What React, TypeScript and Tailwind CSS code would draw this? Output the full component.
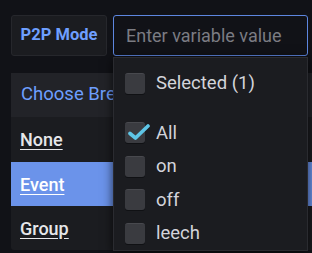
import React from "react";

function Check({ checked }: { checked?: boolean }) {
  return (
    <div className="relative w-[20px] h-[21px] shrink-0 rounded-[3px] bg-[#3a3b40] border-t border-[#48494e] shadow-[0_1px_0_#101114]">
      {checked && (
        <svg
          className="absolute left-[3px] top-[1px]"
          width="22"
          height="16"
          viewBox="0 0 22 16"
        >
          <path
            d="M2 9.5 L7.5 14 L20 2"
            fill="none"
            stroke="#5ec5e6"
            strokeWidth="3.6"
            strokeLinecap="round"
            strokeLinejoin="round"
          />
        </svg>
      )}
    </div>
  );
}

function Option({ label, checked, h }: { label: string; checked?: boolean; h: string }) {
  return (
    <div className={`flex items-center gap-[11px] pl-[11px] ${h}`}>
      <Check checked={checked} />
      <span className="text-[18.5px] leading-none text-[#d3d4da]">{label}</span>
    </div>
  );
}

export default function App() {
  return (
    <div
      className="relative w-[312px] h-[253px] overflow-hidden bg-[#111217]"
      style={{ fontFamily: "Roboto, 'Liberation Sans', sans-serif" }}
    >
      <div className="flex gap-[6px] pl-[11px] pt-[15px]">
        <div className="flex h-[41px] w-[96px] items-center justify-center rounded-[3px] border border-[#26272c] bg-[#1b1c20]">
          <span className="text-[16.5px] font-bold text-[#6e9fff]">P2P Mode</span>
        </div>
        <div className="flex h-[41px] w-[195px] items-center rounded-[3px] border border-[#5d86df] bg-[#111217] pl-[12px]">
          <span className="text-[18px] text-[#7b7c83]">Enter variable value</span>
        </div>
      </div>

      <div className="ml-[11px] mt-[17px] w-[320px] rounded-[3px] bg-[#1b1c20]">
        <div className="flex h-[44px] items-center bg-[#222328] pl-[10px]">
          <span className="block w-[92px] overflow-hidden whitespace-nowrap text-[18.5px] text-[#6e9fff]">Choose Breakdown</span>
        </div>
        <div className="flex h-[45px] items-center pl-[9px]">
          <span className="text-[18px] font-medium text-[#e6e7ea] underline underline-offset-[3px]">None</span>
        </div>
        <div className="flex h-[44px] items-center bg-[#6b93ea] pl-[9px]">
          <span className="text-[18px] font-medium text-white underline underline-offset-[3px]">Event</span>
        </div>
        <div className="flex h-[44px] items-center pl-[9px]">
          <span className="text-[18px] font-medium text-[#e6e7ea] underline underline-offset-[3px]">Group</span>
        </div>
      </div>

      <div className="absolute left-[113px] top-[57px] h-[194px] w-[195px] border border-[#2a2b30] bg-[#1b1c20] pt-[8px] shadow-[0_2px_10px_rgba(0,0,0,0.7)]">
        <Option label="Selected (1)" h="h-[34px]" />
        <div className="h-[16px]" />
        <Option label="All" checked h="h-[33.5px]" />
        <Option label="on" h="h-[33.5px]" />
        <Option label="off" h="h-[33.5px]" />
        <Option label="leech" h="h-[33.5px]" />
      </div>
    </div>
  );
}
